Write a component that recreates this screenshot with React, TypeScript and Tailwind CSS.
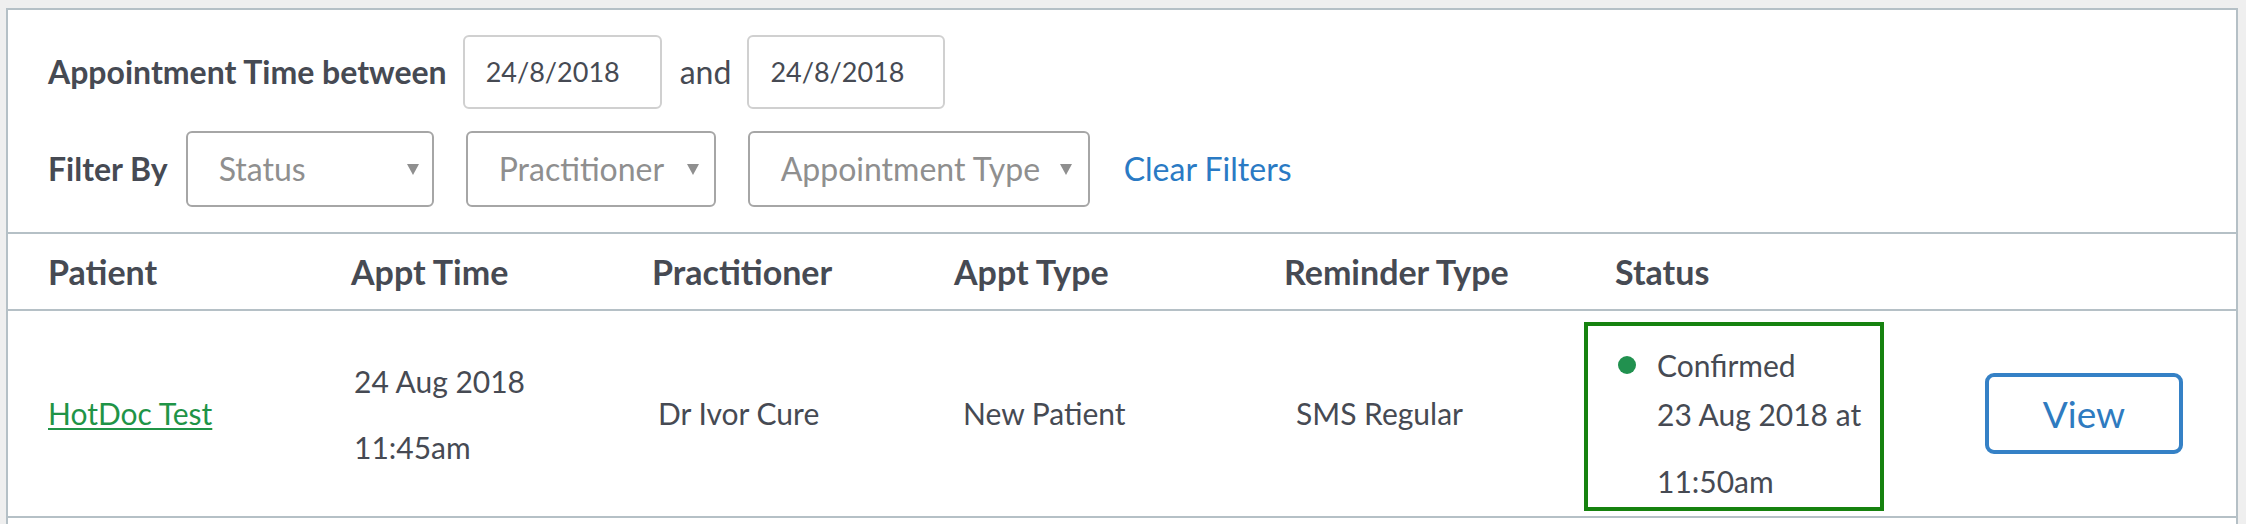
const font = { fontFamily: "Lato, 'Open Sans', sans-serif" };

function DateInput({ value, width }: { value: string; width: string }) {
  return (
    <div
      className={`${width} flex h-[74px] items-center rounded-[6px] border-2 border-[#d0d0d0] pl-[21px] text-[27px] text-[#464a53]`}
    >
      {value}
    </div>
  );
}

function Caret() {
  return (
    <svg width="12" height="11" viewBox="0 0 12 11" className="shrink-0">
      <path d="M0 0 L12 0 L6 11 Z" fill="#8f8f8f" />
    </svg>
  );
}

function SelectBox({ label, className }: { label: string; className: string }) {
  return (
    <div
      className={`${className} flex h-[76px] items-center justify-between rounded-[6px] border-2 border-[#a6a6a6] pl-[31px] text-[32px] text-[#8f8f8f]`}
    >
      <span>{label}</span>
      <Caret />
    </div>
  );
}

export default function App() {
  return (
    <div className="h-[524px] w-[2246px] overflow-hidden bg-[#efefef] pt-[8px] pl-[6px]" style={font}>
      <div className="h-[600px] w-[2232px] border-2 border-[#b5c0c6] bg-white">
        {/* filters */}
        <div className="flex flex-col gap-[22px] pt-[25px] pb-[25px] pl-[40px]">
          <div className="flex items-center">
            <span className="text-[32px] font-bold text-[#464a53]">Appointment Time between</span>
            <div className="ml-[16px]">
              <DateInput value="24/8/2018" width="w-[199px]" />
            </div>
            <span className="ml-[18px] text-[32px] text-[#464a53]">and</span>
            <div className="ml-[16px]">
              <DateInput value="24/8/2018" width="w-[198px]" />
            </div>
          </div>
          <div className="flex items-center">
            <span className="text-[32px] font-bold text-[#464a53]">Filter By</span>
            <SelectBox label="Status" className="ml-[18px] w-[248px] pr-[13px]" />
            <SelectBox label="Practitioner" className="ml-[32px] w-[250px] pr-[15px]" />
            <SelectBox label="Appointment Type" className="ml-[32px] w-[342px] pr-[16px]" />
            <span className="ml-[34px] text-[32px] text-[#2a7ac4]">Clear Filters</span>
          </div>
        </div>

        {/* table header */}
        <div className="flex h-[79px] items-center border-y-2 border-[#b5c0c6] pl-[40px] text-[34px] font-bold text-[#464a53]">
          <div className="w-[303px]">Patient</div>
          <div className="w-[301px]">Appt Time</div>
          <div className="w-[302px]">Practitioner</div>
          <div className="w-[330px]">Appt Type</div>
          <div className="w-[331px]">Reminder Type</div>
          <div>Status</div>
        </div>

        {/* row */}
        <div className="flex h-[207px] items-center border-b-2 border-[#b5c0c6] pl-[40px] text-[30px] text-[#464a53]">
          <div className="w-[306px]">
            <span className="text-[#1f9447] underline decoration-2 underline-offset-[3px]">HotDoc Test</span>
          </div>
          <div className="w-[304px] leading-[34px]">
            <div>24 Aug 2018</div>
            <div className="mt-[32px]">11:45am</div>
          </div>
          <div className="w-[305px]">Dr Ivor Cure</div>
          <div className="w-[333px]">New Patient</div>
          <div className="w-[288px]">SMS Regular</div>
          <div className="mt-[11px] h-[189px] w-[300px] self-start border-4 border-[#16820f] pt-[22px] pl-[30px] leading-[34px]">
            <div className="flex items-center">
              <span className="h-[18px] w-[18px] rounded-full bg-[#21914f]" />
              <span className="ml-[21px]">Confirmed</span>
            </div>
            <div className="mt-[15px] pl-[39px]">23 Aug 2018 at</div>
            <div className="mt-[33px] pl-[39px]">11:50am</div>
          </div>
          <button className="ml-[101px] flex h-[81px] w-[198px] items-center justify-center rounded-[9px] border-4 border-[#3581c6] bg-white text-[37px] text-[#2f7bc0]">
            View
          </button>
        </div>
      </div>
    </div>
  );
}
